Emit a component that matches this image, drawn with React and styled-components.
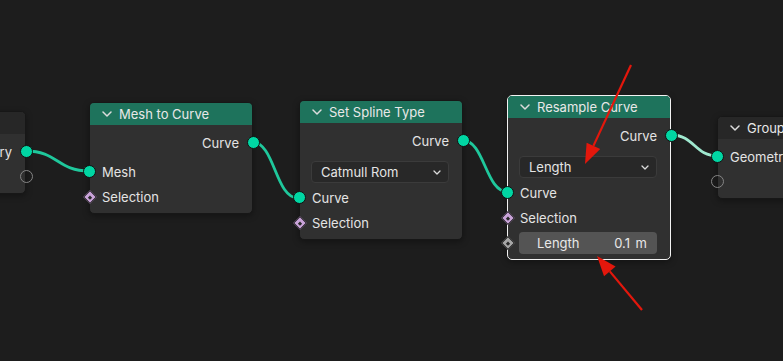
import React from "react";
import styled, { createGlobalStyle, css } from "styled-components";

const GlobalStyle = createGlobalStyle`
  html, body { margin: 0; padding: 0; background: #1d1d1d; overflow: hidden; }
  * { box-sizing: border-box; }
`;

const Canvas = styled.div`
  position: relative;
  width: 783px;
  height: 361px;
  background: #1d1d1d;
  overflow: hidden;
  font-family: Inter, "Noto Sans", "DejaVu Sans", sans-serif;
  font-size: 13px;
  color: #e4e4e4;
`;

const Layer = styled.svg`
  position: absolute;
  left: 0;
  top: 0;
  width: 783px;
  height: 361px;
  pointer-events: none;
  z-index: ${(p) => p.$z};
`;

const NodeBox = styled.div`
  position: absolute;
  z-index: 1;
  width: 164px;
  background: #303030;
  border-radius: 5px;
  border: 1px solid ${(p) => (p.$selected ? "#f2f2f2" : "#171717")};
  box-shadow: 0 2px 6px rgba(0, 0, 0, 0.35);
`;

const Header = styled.div`
  height: 22px;
  display: flex;
  align-items: center;
  gap: 7px;
  padding-left: 12px;
  background: ${(p) => p.$color};
  border-radius: 4px 4px 0 0;
  color: #e8e8e8;
  white-space: nowrap;
  overflow: hidden;
`;

const Body = styled.div`
  padding: 5px 0 ${(p) => p.$pb ?? 4}px;
  display: flex;
  flex-direction: column;
`;

const Row = styled.div`
  position: relative;
  height: 25px;
  display: flex;
  align-items: center;
  justify-content: ${(p) => (p.$out ? "flex-end" : "flex-start")};
  padding: 0 13px 0 12px;
  margin-bottom: ${(p) => p.$gap || 0}px;
  white-space: nowrap;
`;

const socketBase = css`
  position: absolute;
  top: 50%;
  ${(p) => (p.$side === "right" ? "right: -7px;" : "left: -7px;")}
`;

const CircleSocket = styled.span`
  ${socketBase}
  width: 13px;
  height: 13px;
  margin-top: -6.5px;
  ${(p) => (p.$side === "right" ? "right: -7.5px;" : "left: -7.5px;")}
  border-radius: 50%;
  background: #00d6a3;
  border: 1px solid #111;
`;

const HollowSocket = styled.span`
  ${socketBase}
  width: 13px;
  height: 13px;
  margin-top: -6.5px;
  ${(p) => (p.$side === "right" ? "right: -7.5px;" : "left: -7.5px;")}
  border-radius: 50%;
  border: 1.6px solid #858585;
  background: transparent;
`;

const DiamondSocket = styled.span`
  ${socketBase}
  ${(p) => (p.$side === "right" ? "right: -5.5px;" : "left: -5.5px;")}
  width: 10px;
  height: 10px;
  margin-top: -5px;
  transform: rotate(45deg);
  background: ${(p) => p.$color};
  border: 1px solid #1a1a1a;
  &::after {
    content: "";
    position: absolute;
    left: 50%;
    top: 50%;
    width: 3px;
    height: 3px;
    margin: -1.5px 0 0 -1.5px;
    background: #2a2a2a;
  }
`;

const Dropdown = styled.div`
  height: 22px;
  margin: ${(p) => p.$mt}px 13px 2px 11px;
  padding: 0 7px 0 9px;
  display: flex;
  align-items: center;
  justify-content: space-between;
  background: #282828;
  border: 1px solid #3b3b3b;
  border-radius: 4px;
  color: #e4e4e4;
`;

const FieldRow = styled.div`
  position: relative;
  height: 22px;
  margin: 2px 13px 0 11px;
`;

const Field = styled.div`
  height: 100%;
  padding: 0 10px 0 18px;
  display: flex;
  align-items: center;
  justify-content: space-between;
  background: #545454;
  border-radius: 4px;
  color: #e8e8e8;
`;

const FieldValue = styled.span`
  word-spacing: 2px;
`;

const FieldSocket = styled(DiamondSocket)`
  left: -16.5px;
`;

const Chevron = ({ w = 10, h = 6, sw = 1.5 }) => (
  <svg width={w} height={h} viewBox={`0 0 ${w} ${h}`} style={{ flex: "none" }}>
    <polyline
      points={`1,1 ${w / 2},${h - 1} ${w - 1},1`}
      fill="none"
      stroke="#dcdcdc"
      strokeWidth={sw}
      strokeLinecap="round"
      strokeLinejoin="round"
    />
  </svg>
);

const Node = ({ x, y, title, color = "#1e735c", selected, pb, children }) => (
  <NodeBox $selected={selected} style={{ left: x, top: y }}>
    <Header $color={color}>
      <Chevron />
      <span>{title}</span>
    </Header>
    <Body $pb={pb}>{children}</Body>
  </NodeBox>
);

const Socket = ({ kind, side }) => {
  if (kind === "hollow") return <HollowSocket $side={side} />;
  if (kind === "diamond") return <DiamondSocket $side={side} $color="#c9a3d9" />;
  return <CircleSocket $side={side} />;
};

const link = (x1, y1, x2, y2) => {
  const d = Math.max(20, (x2 - x1) * 0.5);
  return `M ${x1} ${y1} C ${x1 + d} ${y1}, ${x2 - d} ${y2}, ${x2} ${y2}`;
};

const links = [
  { a: [26, 151], b: [89, 171], c: "#1fc89c" },
  { a: [252, 142], b: [298, 198], c: "#1fc89c" },
  { a: [462, 140], b: [508, 192], c: "#1fc89c" },
  { a: [671, 135], b: [718, 156], c: "#9fe8cf" },
];

const Arrow = ({ x1, y1, x2, y2 }) => {
  const ang = Math.atan2(y2 - y1, x2 - x1);
  const len = 20;
  const half = 7.5;
  const bx = x2 - Math.cos(ang) * len;
  const by = y2 - Math.sin(ang) * len;
  const px = -Math.sin(ang) * half;
  const py = Math.cos(ang) * half;
  return (
    <g>
      <line x1={x1} y1={y1} x2={bx} y2={by} stroke="#e3170c" strokeWidth="2.2" />
      <polygon
        points={`${x2},${y2} ${bx + px},${by + py} ${bx - px},${by - py}`}
        fill="#e3170c"
      />
    </g>
  );
};

export default function App() {
  return (
    <>
      <GlobalStyle />
      <Canvas>
        <Layer $z={0}>
          {links.map((l, i) => (
            <path
              key={i}
              d={link(l.a[0], l.a[1], l.b[0], l.b[1])}
              fill="none"
              stroke={l.c}
              strokeWidth="2.8"
              strokeLinecap="round"
            />
          ))}
        </Layer>

        <Node x={-138} y={111} title="Group Input" color="#272727" pb={4}>
          <Row $out>
            Geometry
            <Socket kind="circle" side="right" />
          </Row>
          <Row $out>
            <Socket kind="hollow" side="right" />
          </Row>
        </Node>

        <Node x={89} y={102} title="Mesh to Curve">
          <Row $out $gap={4}>
            Curve
            <Socket kind="circle" side="right" />
          </Row>
          <Row>
            <Socket kind="circle" side="left" />
            Mesh
          </Row>
          <Row>
            <Socket kind="diamond" side="left" />
            Selection
          </Row>
        </Node>

        <Node x={299} y={100} title="Set Spline Type">
          <Row $out>
            Curve
            <Socket kind="circle" side="right" />
          </Row>
          <Dropdown $mt={8}>
            <span>Catmull Rom</span>
            <Chevron w={8} h={5} sw={1.3} />
          </Dropdown>
          <Row>
            <Socket kind="circle" side="left" />
            Curve
          </Row>
          <Row>
            <Socket kind="diamond" side="left" />
            Selection
          </Row>
        </Node>

        <Node x={507} y={95} title="Resample Curve" selected pb={5}>
          <Row $out>
            Curve
            <Socket kind="circle" side="right" />
          </Row>
          <Dropdown $mt={8}>
            <span>Length</span>
            <Chevron w={8} h={5} sw={1.3} />
          </Dropdown>
          <Row>
            <Socket kind="circle" side="left" />
            Curve
          </Row>
          <Row>
            <Socket kind="diamond" side="left" />
            Selection
          </Row>
          <FieldRow>
            <FieldSocket $side="left" $color="#a6a6a6" />
            <Field>
              <span>Length</span>
              <FieldValue>0.1 m</FieldValue>
            </Field>
          </FieldRow>
        </Node>

        <Node x={717} y={116} title="Group Output" color="#272727" pb={4}>
          <Row>
            <Socket kind="circle" side="left" />
            Geometry
          </Row>
          <Row>
            <Socket kind="hollow" side="left" />
          </Row>
        </Node>

        <Layer $z={2}>
          <Arrow x1={631} y1={65} x2={585} y2={164} />
          <Arrow x1={642} y1={310} x2={597} y2={256} />
        </Layer>
      </Canvas>
    </>
  );
}
